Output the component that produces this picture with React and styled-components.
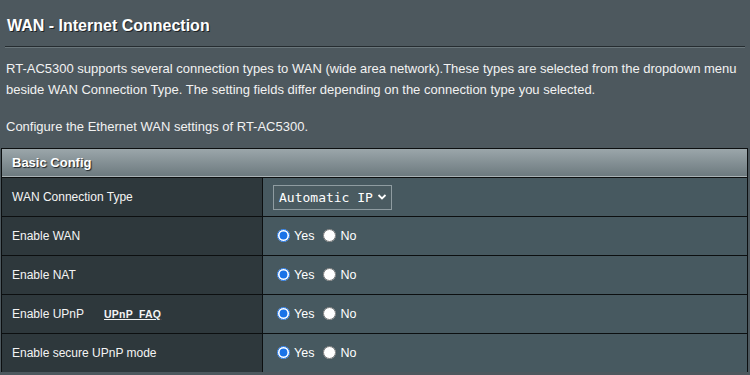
import React from 'react';
import styled, { createGlobalStyle } from 'styled-components';

const GlobalStyle = createGlobalStyle`
  html, body {
    margin: 0;
    padding: 0;
    background: #4d585e;
  }
  body {
    font-family: "Liberation Sans", Arial, sans-serif;
    color: #fff;
  }
`;

const Page = styled.div`
  width: 750px;
  height: 375px;
  overflow: hidden;
  background: #4d585e;
`;

const Intro = styled.div`
  padding: 0 5px 0 5px;
`;

const Title = styled.h1`
  margin: 0;
  padding: 17px 0 0 2px;
  height: 29px;
  font-size: 16px;
  font-weight: bold;
  color: #fff;
  text-shadow: 1px 1px 0 #1d2326;
`;

const Divider = styled.div`
  height: 1px;
  background: #252c30;
  border-bottom: 1px solid #6a767b;
`;

const Text = styled.p`
  margin: 0;
  padding: ${({ top }) => top || 0}px 0 0 1px;
  font-size: 13px;
  line-height: 21px;
  color: #f2f2f2;
`;

const Table = styled.div`
  margin: 11px 2px 0 1px;
  border: 1px solid #0c0f10;
  border-bottom: none;
`;

const Header = styled.div`
  height: 27px;
  display: flex;
  align-items: center;
  padding-left: 10px;
  background: linear-gradient(#9ba6aa, #6d7a7f);
  border-bottom: 1px solid #a9b2b5;
  font-size: 13px;
  font-weight: bold;
  color: #fff;
  text-shadow: 1px 1px 1px #1d2326;
`;

const Row = styled.div`
  display: grid;
  grid-template-columns: 261px 1fr;
  height: 38px;
  border-top: 1px solid #0c0f10;
`;

const Label = styled.div`
  display: flex;
  align-items: center;
  padding-left: 10px;
  background: #2e383c;
  border-right: 1px solid #0c0f10;
  font-size: 12px;
  color: #f4f4f4;
`;

const Value = styled.div`
  display: flex;
  align-items: center;
  padding-left: 10px;
  background: #475960;
  font-size: 12.5px;
  color: #fff;
`;

const FaqLink = styled.a`
  margin-left: 20px;
  font-size: 10.5px;
  font-weight: bold;
  letter-spacing: 0.2px;
  white-space: pre;
  color: #f4f4f4;
  text-decoration: underline;
`;

const Select = styled.div`
  display: flex;
  align-items: center;
  gap: 4px;
  height: 23px;
  padding: 0 4px 0 5px;
  border: 1px solid #8f9ca1;
  background: #4a5b61;
  font-family: "DejaVu Sans Mono", "Liberation Mono", monospace;
  font-size: 13px;
  color: #fff;
`;

const RadioGroup = styled.label`
  display: flex;
  align-items: center;
  margin-left: ${({ first }) => (first ? 4 : 9)}px;
  cursor: pointer;
`;

const Radio = styled.input`
  margin: 0 4px 2px 0;
  width: 13px;
  height: 13px;
  accent-color: #1a73e8;
`;

const rows = [
  { label: 'Enable WAN', name: 'wan' },
  { label: 'Enable NAT', name: 'nat' },
  { label: 'Enable UPnP', name: 'upnp', faq: true },
  { label: 'Enable secure UPnP mode', name: 'secure' },
];

const YesNo = ({ name }) => (
  <>
    <RadioGroup first>
      <Radio type="radio" name={name} defaultChecked />
      Yes
    </RadioGroup>
    <RadioGroup>
      <Radio type="radio" name={name} />
      No
    </RadioGroup>
  </>
);

export default function App() {
  return (
    <Page>
      <GlobalStyle />
      <Intro>
        <Title>WAN - Internet Connection</Title>
        <Divider />
        <Text top={10}>
          RT-AC5300 supports several connection types to WAN (wide area network).These types are selected from the dropdown menu beside WAN Connection Type. The setting fields differ depending on the connection type you selected.
        </Text>
        <Text top={16}>Configure the Ethernet WAN settings of RT-AC5300.</Text>
      </Intro>
      <Table>
        <Header>Basic Config</Header>
        <Row>
          <Label>WAN Connection Type</Label>
          <Value>
            <Select>
              Automatic IP
              <svg width="10" height="8" viewBox="0 0 10 8">
                <path d="M1.5 2 L5 5.5 L8.5 2" fill="none" stroke="#fff" strokeWidth="1.8" />
              </svg>
            </Select>
          </Value>
        </Row>
        {rows.map((r) => (
          <Row key={r.name}>
            <Label>
              {r.label}
              {r.faq && <FaqLink href="#">{'UPnP  FAQ'}</FaqLink>}
            </Label>
            <Value>
              <YesNo name={r.name} />
            </Value>
          </Row>
        ))}
      </Table>
    </Page>
  );
}
